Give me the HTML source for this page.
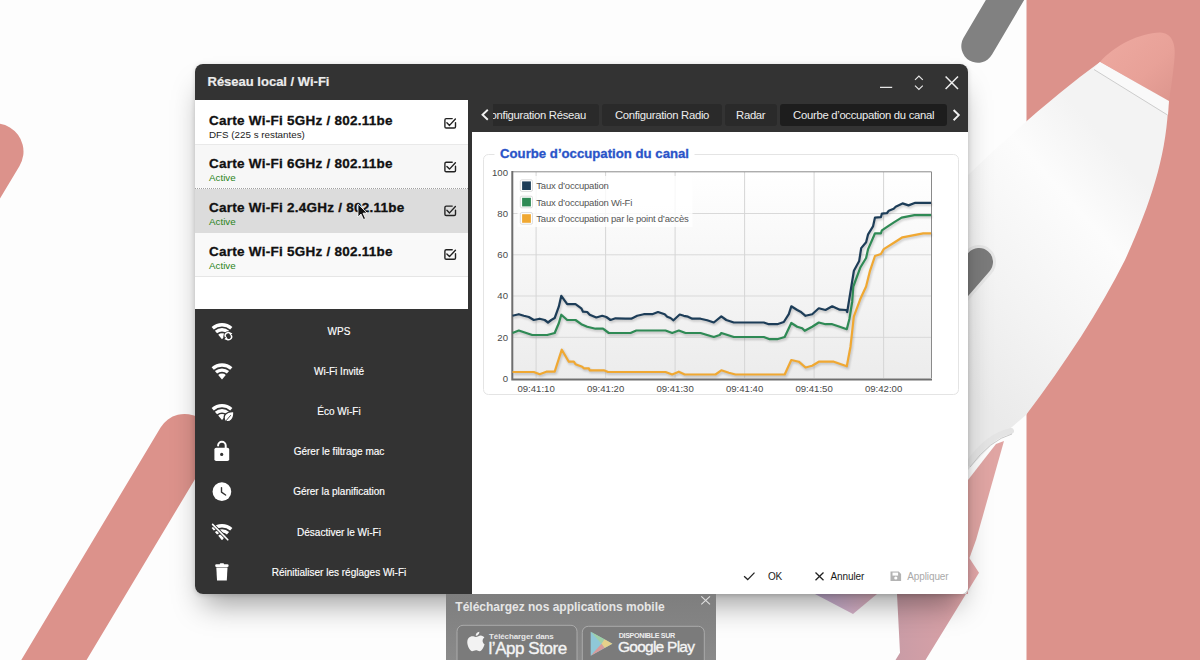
<!DOCTYPE html>
<html><head><meta charset="utf-8">
<style>
*{margin:0;padding:0;box-sizing:border-box}
html,body{width:1200px;height:660px;overflow:hidden;background:#fdfdfd;font-family:"Liberation Sans",sans-serif}
.a{position:absolute}
.t{position:absolute;white-space:nowrap;line-height:1}
#dlg{position:absolute;left:195px;top:64px;width:773px;height:530px;border-radius:8px;background:linear-gradient(#333 68px,transparent 68px),linear-gradient(to right,#333 277.5px,#fff 277.5px);box-shadow:0 18px 28px -8px rgba(0,0,0,.38),0 1px 5px rgba(0,0,0,.16);overflow:hidden}
.row{position:absolute;left:0;width:273px;height:44px}
.rt{position:absolute;left:14px;font-weight:bold;font-size:13.5px;letter-spacing:.25px;color:#111;-webkit-text-stroke:.3px #111;white-space:nowrap;line-height:1}
.rs{position:absolute;left:14px;font-size:9.8px;color:#222;white-space:nowrap;line-height:1}
.mi{position:absolute;left:0;width:278px;text-align:center;font-size:10px;color:#fff;-webkit-text-stroke:.15px #fff;white-space:nowrap;line-height:1;padding-left:10px}
.tab{position:absolute;top:40px;height:22px;border-radius:3px;background:#2a2a2a;color:#ededed;font-size:11.3px;letter-spacing:-.3px;line-height:22px;white-space:nowrap;text-align:center}
</style></head><body>

<!-- background -->
<svg class="a" style="left:0;top:0" width="1200" height="660" viewBox="0 0 1200 660">
  <defs>
    <linearGradient id="body" x1="960" y1="380" x2="1160" y2="200" gradientUnits="userSpaceOnUse">
      <stop offset="0" stop-color="#eaeaea"/>
      <stop offset="0.35" stop-color="#f3f3f3"/>
      <stop offset="0.75" stop-color="#fcfcfc"/>
      <stop offset="1" stop-color="#f3f3f3"/>
    </linearGradient>
    <linearGradient id="nose" x1="0" y1="0" x2="1" y2="1">
      <stop offset="0" stop-color="#eeaaa1"/>
      <stop offset="0.6" stop-color="#e8a198"/>
      <stop offset="1" stop-color="#dc958d"/>
    </linearGradient>
  </defs>
  <rect x="1026.5" y="0" width="173.5" height="660" fill="#dc928b"/>
  <line x1="-4.5" y1="151.5" x2="-244.5" y2="551.5" stroke="#dc928b" stroke-width="56" stroke-linecap="round"/>
  <line x1="184.6" y1="442" x2="-60" y2="850" stroke="#dc928b" stroke-width="56" stroke-linecap="round"/>
  <line x1="977.8" y1="46.2" x2="1040.8" y2="-60.8" stroke="#818181" stroke-width="33" stroke-linecap="round"/>
  <!-- fins -->
  <defs>
    <linearGradient id="finp" x1="0" y1="0" x2="1" y2="0">
      <stop offset="0" stop-color="#c4b0d6"/><stop offset="1" stop-color="#e2b4c2"/>
    </linearGradient>
    <linearGradient id="finb" x1="0" y1="0" x2="1" y2="0">
      <stop offset="0" stop-color="#c99ca6"/><stop offset="0.6" stop-color="#d6a0a6"/><stop offset="1" stop-color="#e6a9aa"/>
    </linearGradient>
  </defs>
  <path d="M1004,441 L996,444 L968,480 L968,562 L976,540 Z" fill="#e0a5a3"/>
  <path d="M968,556 L979,572.7 L925.5,660 L895.5,660 L900,652.7 L897,594 L968,594 Z" fill="url(#finb)"/>
  <path d="M815,594 L853,614 L877,594 Z" fill="url(#finp)"/>
  <!-- rocket body -->
  <path d="M1100,62 L1168,102 L1168,110 C1165,160 1150,205 1125,260 C1100,310 1066,362 1026,415 L1012,427 Q995,440 968,470 L880,470 L880,245 L968,175 C1008,136 1060,91 1100,62 Z" fill="url(#body)"/>
  <path d="M969,463 Q988,436 1011,431" stroke="#e4e4e4" stroke-width="6" fill="none" stroke-linecap="round"/>
  <path d="M970,467 Q990,440 1012,434" stroke="#c9c9c9" stroke-width="1" fill="none"/>
  <path d="M1100,62 C1115,45 1140,33 1160,32.5 C1172,33 1176,44 1174.5,58 C1173,75 1171,88 1169,101 Z" fill="url(#nose)"/>
  <path d="M1100,62 L1169,101 L1168,115 L1093,69 Z" fill="#f9f9f9"/>
  <path d="M1094,69.5 L1167.5,115" stroke="#cdcdcd" stroke-width="1"/>
  <line x1="979" y1="262" x2="920" y2="330" stroke="#e6e6e6" stroke-width="34" stroke-linecap="round"/>
  <line x1="979" y1="262" x2="920" y2="330" stroke="#7b7b7b" stroke-width="28" stroke-linecap="round"/>
</svg>

<div id="dlg">
  <div class="t" style="left:12.5px;top:11.4px;font-size:13px;font-weight:bold;color:#ececec;-webkit-text-stroke:.2px #ececec">Réseau local / Wi-Fi</div>
  <!-- window controls -->
  <svg class="a" style="left:680px;top:8px" width="90" height="30" viewBox="875 72 90 30">
    <path d="M880,87.3 H892.2" stroke="#e6e6e6" stroke-width="1.3"/>
    <path d="M915,79.9 L918.9,76 L922.8,79.9 M915,85.6 L918.9,89.5 L922.8,85.6" stroke="#e6e6e6" stroke-width="1.2" fill="none"/>
    <path d="M945.6,76.5 L958,89 M958,76.5 L945.6,89" stroke="#eeeeee" stroke-width="1.5"/>
  </svg>



  <!-- tabs -->
  <div class="a" style="left:298px;top:36px;width:455px;height:32px;overflow:hidden">
    <div class="tab" style="left:-15px;top:4px;width:121px;text-align:right;padding-right:13px">Configuration Réseau</div>
    <div class="tab" style="left:109px;top:4px;width:120px">Configuration Radio</div>
    <div class="tab" style="left:231.7px;top:4px;width:52px">Radar</div>
    <div class="tab" style="left:287px;top:4px;width:167.3px;background:#1d1d1d">Courbe d’occupation du canal</div>
  </div>
  <svg class="a" style="left:278px;top:36px" width="495" height="32" viewBox="473 100 495 32">
    <path d="M487.8,109.8 L482.5,114.8 L487.8,119.8" stroke="#f0f0f0" stroke-width="1.9" fill="none"/>
    <path d="M953.6,110 L958.8,115.1 L953.6,120.2" stroke="#f0f0f0" stroke-width="1.9" fill="none"/>
  </svg>
  <!-- content -->
  <div class="a" style="left:277.5px;top:68px;width:495.5px;height:462px;background:#fff">
    <svg class="a" style="left:0;top:0" width="496" height="462" viewBox="472.5 132 496 462">
      <defs>
        <linearGradient id="pbg" x1="0" y1="0" x2="0" y2="1">
          <stop offset="0" stop-color="#ffffff"/>
          <stop offset="1" stop-color="#ececec"/>
        </linearGradient>
        <filter id="sh" x="-5%" y="-5%" width="110%" height="120%"><feGaussianBlur stdDeviation="0.8"/></filter>
      </defs>
      <rect x="483" y="154.5" width="475" height="240" rx="5" fill="none" stroke="#e4e4e4" stroke-width="1"/>
      <rect x="494" y="145" width="200" height="18" fill="#fff"/>
      <text x="499.5" y="157.7" font-family="Liberation Sans" font-weight="bold" font-size="13.2" fill="#2a54c8" stroke="#2a54c8" stroke-width="0.3">Courbe d’occupation du canal</text>
      <rect x="512" y="172" width="419" height="206.6" fill="url(#pbg)"/>
      <path d="M512,337.3 H931" stroke="#d9d9d9" stroke-width="1"/><path d="M512,296.0 H931" stroke="#d9d9d9" stroke-width="1"/><path d="M512,254.8 H931" stroke="#d9d9d9" stroke-width="1"/><path d="M512,213.5 H931" stroke="#d9d9d9" stroke-width="1"/><path d="M535.6,172 V378" stroke="#d6d6d6" stroke-width="1"/><path d="M605.1,172 V378" stroke="#d6d6d6" stroke-width="1"/><path d="M674.6,172 V378" stroke="#d6d6d6" stroke-width="1"/><path d="M744.1,172 V378" stroke="#d6d6d6" stroke-width="1"/><path d="M813.6,172 V378" stroke="#d6d6d6" stroke-width="1"/><path d="M883.1,172 V378" stroke="#d6d6d6" stroke-width="1"/>
      <path d="M512,171.8 H931 V378" stroke="#8a8a8a" stroke-width="1" fill="none"/>
      <path d="M511.8,171 V379.6 H931.5" stroke="#6e6e6e" stroke-width="2" fill="none"/>
      <g font-family="Liberation Sans" font-size="9.6" fill="#4a4a4a"><text x="507.5" y="382.0" text-anchor="end">0</text><text x="507.5" y="340.7" text-anchor="end">20</text><text x="507.5" y="299.4" text-anchor="end">40</text><text x="507.5" y="258.2" text-anchor="end">60</text><text x="507.5" y="216.9" text-anchor="end">80</text><text x="507.5" y="175.6" text-anchor="end">100</text><text x="535.6" y="391.6" text-anchor="middle">09:41:10</text><text x="605.1" y="391.6" text-anchor="middle">09:41:20</text><text x="674.6" y="391.6" text-anchor="middle">09:41:30</text><text x="744.1" y="391.6" text-anchor="middle">09:41:40</text><text x="813.6" y="391.6" text-anchor="middle">09:41:50</text><text x="883.1" y="391.6" text-anchor="middle">09:42:00</text></g>
      <g transform="translate(1,1.6)" opacity="0.18" filter="url(#sh)">
        <polyline points="512,372 533.3,372 539.2,374.2 545.8,371.7 554.2,371.7 561.3,349.7 568.3,361.7 573.3,361.7 575,364.2 581.7,366.7 583.3,368.3 588.3,368.3 589.2,370.3 603.3,370.3 607.5,372 625,372 665,372 671.7,374.5 678.3,371.7 684.2,374.5 715,374.5 720.8,370.3 728.3,372.8 735,374.5 784.2,374.5 790.8,360 798.3,361.7 805,367.5 811.7,365.8 818.3,361.7 833.3,361.7 846.3,366.3 850,346.7 853.3,316.7 859.7,299.3 865.6,286.5 869.5,270.8 874.5,256 880.4,254 883.3,249.1 894.2,242.2 902,237.3 922.7,233.3 930.6,233.3" stroke="#000" stroke-width="2.6" fill="none"/>
        <polyline points="512,333 518.3,330.5 531.7,335 546.7,335 554.2,333 558.3,323.3 560.8,314.7 566.7,320 575,320 580.8,324.2 586.7,326.7 595,328.7 602.5,328.7 608.3,333 625,333 630,333 635.8,330.5 665,330.5 671.7,333 678.3,330.5 685,333 700,333 713.3,337 719.2,335 720.8,333 733.3,337 763.3,337 769.2,339.2 776.7,339.2 784.2,337 790.8,323 796.7,326.7 801.7,328.3 804.2,330.8 811.7,326.7 818.3,322.5 825,324.2 831.7,324.2 839.2,326.7 846.3,329.2 848.9,319 851.7,301.7 852.8,286.5 859.7,267.8 865.6,258 867.6,249.1 871.5,240.2 874.5,233.3 880.4,233.3 881.4,230.4 887.3,226.4 894.2,221.9 901.1,217.6 913.9,215.2 930.6,215.2" stroke="#000" stroke-width="2.6" fill="none"/>
        <polyline points="512,315.8 518.3,314.2 523.3,315.8 528.3,317 533.3,320 539.2,318.7 544.2,320 547.5,322.5 550.8,320 554.2,318 558.3,306.7 560.8,295.8 566.7,304.2 575,304.2 580.8,308.3 582.5,311.7 586.7,312 589.2,314.7 595.8,317.5 601.7,315.8 605.8,317 610,320 615,318.3 625,318.7 630.8,318.7 636.7,315.8 643.3,314.2 651.7,314.2 657.5,312 664.2,314.2 666.7,316.7 670,318 673,320.3 679.2,314.5 683.3,315.8 687.5,316.7 691.7,318.7 700,318.7 706.7,320.3 713.3,322.5 720.8,316.3 725.8,320 733.3,322.5 763.3,322.5 768.3,324.2 776.7,324.2 783.3,322 788.3,314.2 790.8,306.3 796.7,310 800,311.7 805,315.8 811.7,314.2 818.3,308.3 825,310 831.7,306.3 839.2,309.7 845.8,310 846.7,312 853.4,270.8 858.7,260.9 860.7,248.1 865.6,242.2 867.6,234.3 872.5,226.4 874.5,217.6 880.4,217.2 881.4,213.6 886.3,213.2 888.3,210.7 893.2,208.7 895.2,206.7 902,203.4 908,205.4 914.8,202.8 930.6,202.8" stroke="#000" stroke-width="2.6" fill="none"/>
      </g>
      <polyline points="512,372 533.3,372 539.2,374.2 545.8,371.7 554.2,371.7 561.3,349.7 568.3,361.7 573.3,361.7 575,364.2 581.7,366.7 583.3,368.3 588.3,368.3 589.2,370.3 603.3,370.3 607.5,372 625,372 665,372 671.7,374.5 678.3,371.7 684.2,374.5 715,374.5 720.8,370.3 728.3,372.8 735,374.5 784.2,374.5 790.8,360 798.3,361.7 805,367.5 811.7,365.8 818.3,361.7 833.3,361.7 846.3,366.3 850,346.7 853.3,316.7 859.7,299.3 865.6,286.5 869.5,270.8 874.5,256 880.4,254 883.3,249.1 894.2,242.2 902,237.3 922.7,233.3 930.6,233.3" stroke="#f0a832" stroke-width="2.2" fill="none" stroke-linejoin="round"/>
      <polyline points="512,333 518.3,330.5 531.7,335 546.7,335 554.2,333 558.3,323.3 560.8,314.7 566.7,320 575,320 580.8,324.2 586.7,326.7 595,328.7 602.5,328.7 608.3,333 625,333 630,333 635.8,330.5 665,330.5 671.7,333 678.3,330.5 685,333 700,333 713.3,337 719.2,335 720.8,333 733.3,337 763.3,337 769.2,339.2 776.7,339.2 784.2,337 790.8,323 796.7,326.7 801.7,328.3 804.2,330.8 811.7,326.7 818.3,322.5 825,324.2 831.7,324.2 839.2,326.7 846.3,329.2 848.9,319 851.7,301.7 852.8,286.5 859.7,267.8 865.6,258 867.6,249.1 871.5,240.2 874.5,233.3 880.4,233.3 881.4,230.4 887.3,226.4 894.2,221.9 901.1,217.6 913.9,215.2 930.6,215.2" stroke="#2f8a55" stroke-width="2.2" fill="none" stroke-linejoin="round"/>
      <polyline points="512,315.8 518.3,314.2 523.3,315.8 528.3,317 533.3,320 539.2,318.7 544.2,320 547.5,322.5 550.8,320 554.2,318 558.3,306.7 560.8,295.8 566.7,304.2 575,304.2 580.8,308.3 582.5,311.7 586.7,312 589.2,314.7 595.8,317.5 601.7,315.8 605.8,317 610,320 615,318.3 625,318.7 630.8,318.7 636.7,315.8 643.3,314.2 651.7,314.2 657.5,312 664.2,314.2 666.7,316.7 670,318 673,320.3 679.2,314.5 683.3,315.8 687.5,316.7 691.7,318.7 700,318.7 706.7,320.3 713.3,322.5 720.8,316.3 725.8,320 733.3,322.5 763.3,322.5 768.3,324.2 776.7,324.2 783.3,322 788.3,314.2 790.8,306.3 796.7,310 800,311.7 805,315.8 811.7,314.2 818.3,308.3 825,310 831.7,306.3 839.2,309.7 845.8,310 846.7,312 853.4,270.8 858.7,260.9 860.7,248.1 865.6,242.2 867.6,234.3 872.5,226.4 874.5,217.6 880.4,217.2 881.4,213.6 886.3,213.2 888.3,210.7 893.2,208.7 895.2,206.7 902,203.4 908,205.4 914.8,202.8 930.6,202.8" stroke="#1d3d58" stroke-width="2.2" fill="none" stroke-linejoin="round"/>
      <!-- legend -->
      <rect x="517" y="176" width="175" height="51" fill="#fff" opacity="0.8"/>
      <g>
        <rect x="519.8" y="179.8" width="12.2" height="11.6" rx="1.5" fill="#fff" stroke="#dcdcdc"/>
        <rect x="521.6" y="181.4" width="8.8" height="8.6" fill="#1d3d58"/>
        <rect x="519.8" y="196.2" width="12.2" height="11.6" rx="1.5" fill="#fff" stroke="#dcdcdc"/>
        <rect x="521.6" y="197.8" width="8.8" height="8.6" fill="#2f8a55"/>
        <rect x="519.8" y="212.6" width="12.2" height="11.6" rx="1.5" fill="#fff" stroke="#dcdcdc"/>
        <rect x="521.6" y="214.2" width="8.8" height="8.6" fill="#f0a832"/>
      </g>
      <g font-family="Liberation Sans" font-size="9.5" fill="#555" letter-spacing="-0.22">
        <text x="535.8" y="189.3">Taux d’occupation</text>
        <text x="535.8" y="205.7">Taux d’occupation Wi-Fi</text>
        <text x="535.8" y="222.2">Taux d’occupation par le point d’accès</text>
      </g>
      <!-- buttons -->
      <path d="M743.6,576.3 L747.2,579.6 L754,572.6" stroke="#222" stroke-width="1.3" fill="none"/>
      <path d="M815,572.5 L823,580.2 M823,572.5 L815,580.2" stroke="#222" stroke-width="1.3"/>
      <path d="M890,571.5 H898.2 L900.6,573.9 V581 H890 Z" fill="#b3b3b3"/>
      <rect x="892" y="572.6" width="5.6" height="3" fill="#fff"/>
      <circle cx="895.3" cy="578" r="1.6" fill="#fff"/>
      <g font-family="Liberation Sans" font-size="10" letter-spacing="-0.1">
        <text x="767.4" y="579.8" fill="#1a1a1a">OK</text>
        <text x="830" y="579.8" fill="#1a1a1a">Annuler</text>
        <text x="906.7" y="579.8" fill="#aaaaaa">Appliquer</text>
      </g>
    </svg>
  </div>
  <!-- menu -->
  <div class="mi" style="top:262.5px">WPS</div>
  <div class="mi" style="top:302.7px">Wi-Fi Invité</div>
  <div class="mi" style="top:342.9px">Éco Wi-Fi</div>
  <div class="mi" style="top:383.1px">Gérer le filtrage mac</div>
  <div class="mi" style="top:423.3px">Gérer la planification</div>
  <div class="mi" style="top:463.5px">Désactiver le Wi-Fi</div>
  <div class="mi" style="top:503.7px">Réinitialiser les réglages Wi-Fi</div>
  <svg class="a" style="left:0;top:245px" width="278" height="285" viewBox="195 309 278 285" fill="#fff">
    <!-- wifi generic at center 222 -->
    <defs>
      <path id="wf" d="M211.6,367.3 A15.5,15.5 0 0 1 232.4,367.3 L230.2,369.8 A12.4,12.4 0 0 0 213.8,369.8 Z M214.9,371.1 A10.7,10.7 0 0 1 229.1,371.1 L226.9,373.6 A7.6,7.6 0 0 0 217.1,373.6 Z M218.2,375 A5.6,5.6 0 0 1 225.8,375 L222,379.5 Z"/>
    </defs>
    <use href="#wf" y="-40.3"/>
    <use href="#wf"/>
    <use href="#wf" y="40.6"/>
    <circle cx="228.4" cy="336.2" r="5" fill="#333"/>
    <path d="M225.6,337.2 A3,3 0 0 1 230.6,333.9 M231.2,335.2 A3,3 0 0 1 226.2,338.5" stroke="#fff" stroke-width="1.4" fill="none"/>
    <path d="M229.2,332.2 L232.4,333.2 L230.2,335.8 Z M227.6,340.2 L224.4,339.2 L226.6,336.6 Z"/>
    <path d="M225,421 C222.3,415.2 226.4,411.2 233.8,411.7 C234.4,419 230.2,423.4 225,421 Z" stroke="#333" stroke-width="1.3"/>
    <path d="M224.6,422.4 L230.8,415.2" stroke="#333" stroke-width="0.9"/>
    <!-- lock -->
    <rect x="214.4" y="447.8" width="14.8" height="13.2" rx="1.8"/>
    <path d="M218.1,445.6 A3.8,3.8 0 0 1 225.7,445.6 V448.5" stroke="#fff" stroke-width="2" fill="none" stroke-linecap="round"/>
    <circle cx="221.7" cy="454.4" r="1.6" fill="#333"/>
    <!-- clock -->
    <circle cx="221.9" cy="491.7" r="9.35"/>
    <path d="M221.5,487.6 V492.2 L225.6,495" stroke="#333" stroke-width="1.4" fill="none" stroke-linecap="round" stroke-linejoin="round"/>
    <!-- wifi off -->
    <use href="#wf" y="160.8"/>
    <path d="M211.5,523.2 L228.8,540.8" stroke="#333" stroke-width="3.2"/>
    <path d="M212.6,524.4 L227.8,539.8" stroke="#fff" stroke-width="1.6" stroke-linecap="round"/>
    <!-- trash -->
    <rect x="215.2" y="564.3" width="13.4" height="2.6" rx="1.2"/>
    <rect x="219.8" y="563.2" width="4.2" height="2" rx="0.8"/>
    <path d="M216.3,567.6 H227.5 L226.8,580.6 H217 Z"/>
  </svg>
  <!-- list -->
  <div class="a" style="left:0;top:36px;width:273px;height:209px;background:#fff">
    <div class="row" style="top:44px;background:#f7f7f7"></div>
    <div class="row" style="top:88.5px;height:44px;background:#dcdcdc"></div>
    <div class="row" style="top:132.5px;background:#f9f9f9"></div>
    <div class="a" style="left:0;top:44px;width:273px;height:1px;background:#e9e9e9"></div>
    <div class="a" style="left:0;top:88px;width:273px;height:1px;border-top:1px dotted #a0a0a0"></div>
    <div class="a" style="left:0;top:176px;width:273px;height:1px;background:#e6e6e6"></div>
    <div class="rt" style="top:13.5px">Carte Wi-Fi 5GHz / 802.11be</div>
    <div class="rs" style="top:29.7px">DFS (225 s restantes)</div>
    <div class="rt" style="top:57.2px">Carte Wi-Fi 6GHz / 802.11be</div>
    <div class="rs" style="top:73.4px;color:#2a8420">Active</div>
    <div class="rt" style="top:101px">Carte Wi-Fi 2.4GHz / 802.11be</div>
    <div class="rs" style="top:117.1px;color:#2a8420">Active</div>
    <div class="rt" style="top:144.7px">Carte Wi-Fi 5GHz / 802.11be</div>
    <div class="rs" style="top:160.9px;color:#2a8420">Active</div>
    <svg class="a" style="left:0;top:0" width="273" height="209" viewBox="195 100 273 209">
      <g fill="none" stroke="#222" stroke-width="1.4" stroke-linecap="round" stroke-linejoin="round">
        <g id="cb"><path d="M452.2,118.6 H446.2 Q444.9,118.6 444.9,119.9 V126.7 Q444.9,128 446.2,128 H454.2 Q455.5,128 455.5,126.7 V122.6"/><path d="M446.9,122.7 L449.5,125.4 L455.4,119"/></g>
        <use href="#cb" y="43.7"/><use href="#cb" y="87.5"/><use href="#cb" y="131.2"/>
      </g>
      <path d="M358,204 L358,217 L361,214 L363.5,219.5 L365.5,218.6 L363,213.2 L367,213 Z" fill="#111" stroke="#fff" stroke-width="0.8"/>
    </svg>
  </div>

</div>

<!-- download overlay -->
<div class="a" style="left:446px;top:594px;width:270px;height:66px;background:linear-gradient(#7e7e7e,#8a8a8a);overflow:hidden">
  <svg class="a" style="left:0;top:0" width="270" height="66" viewBox="446 594 270 66">
    <text x="455.3" y="611" font-family="Liberation Sans" font-weight="bold" font-size="12" fill="#e6e6e6">Téléchargez nos applications mobile</text>
    <path d="M701.3,596.3 L710,604.3 M710,596.3 L701.3,604.3" stroke="#e0e0e0" stroke-width="1.1"/>
    <rect x="457" y="625.3" width="120" height="50" rx="6" fill="#7b7b7b" stroke="#ababab" stroke-width="1"/>
    <rect x="582.3" y="626.3" width="122" height="50" rx="6" fill="#7b7b7b" stroke="#ababab" stroke-width="1"/>
    <!-- apple -->
    <path transform="translate(475.3 643.5) scale(1.12) translate(-475.3 -643.5)" d="M475.6,637.6 C477.5,637.6 478.8,636.3 480,636.3 C481.6,636.3 482.8,637.2 483.4,638.1 C481.2,639.4 481.4,643 483.6,644.1 C483,646 481.9,648.4 480.6,649.7 C479.6,650.7 478.7,650.3 477.6,649.9 C476.3,649.4 475.2,649.4 474,650 C472.9,650.5 472,650.8 471,649.6 C468.4,646.7 467,641.4 469.3,638.6 C470.7,636.9 472.9,636.6 474.2,637.2 C474.8,637.4 475.2,637.6 475.6,637.6 Z M475.7,636.6 C475.5,634.8 477,633 478.9,632.9 C479.1,634.8 477.4,636.6 475.7,636.6 Z" fill="#f2f2f2"/>
    <text x="489" y="639.2" font-family="Liberation Sans" font-weight="bold" font-size="8" fill="#e8e8e8" letter-spacing="-0.1">Télécharger dans</text>
    <text x="488.5" y="653.8" font-family="Liberation Sans" font-size="17" fill="#f4f4f4" stroke="#f4f4f4" stroke-width="0.35" letter-spacing="-0.45">l’App Store</text>
    <!-- play -->
    <path d="M590.7,631.7 L612.4,643.7 L590.7,655.7 Z" fill="#8fc8d8"/>
    <path d="M590.7,631.7 L604.5,639.3 L601.5,643.7 Z" fill="#9fd0a8"/>
    <path d="M604.5,639.3 L612.4,643.7 L604.5,648.1 L601.5,643.7 Z" fill="#e6d08a"/>
    <path d="M590.7,655.7 L604.5,648.1 L601.5,643.7 Z" fill="#d89a9a"/>
    <text x="618.7" y="637.7" font-family="Liberation Sans" font-weight="bold" font-size="7.2" fill="#ededed" letter-spacing="-0.35">DISPONIBLE SUR</text>
    <text x="618" y="652.3" font-family="Liberation Sans" font-size="15.5" fill="#f4f4f4" stroke="#f4f4f4" stroke-width="0.35" letter-spacing="-0.75">Google Play</text>
  </svg>
</div>
</body></html>
